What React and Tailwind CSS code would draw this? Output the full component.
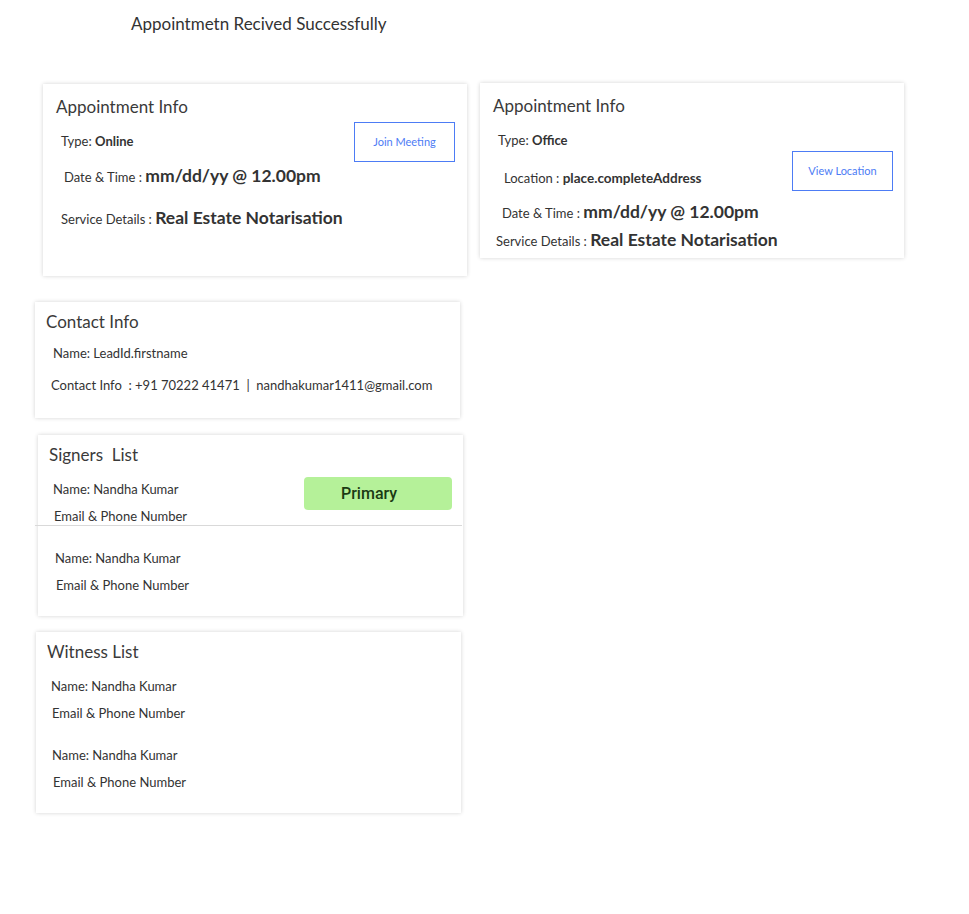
const Card = ({ className = '', children }) => (
  <div className={`bg-white shadow-[0_0_4px_rgba(0,0,0,0.18)] ${className}`}>{children}</div>
);

const Line = ({ className = '', children }) => (
  <div className={`h-[18px] text-[13px] leading-[18px] text-[#333] ${className}`}>{children}</div>
);

const Outline = ({ children, className = '' }) => (
  <button className={`flex h-[40px] w-[101px] items-center justify-center border border-[#4d7cf5] text-[11px] text-[#4d7cf5] ${className}`}>
    {children}
  </button>
);

const Heading = ({ children, className = '' }) => (
  <h3 className={`h-[24px] text-[17px] leading-[24px] text-[#3a3a3a] ${className}`}>{children}</h3>
);

const Person = ({ first = 'mt-[13px]', className = '' }) => (
  <div className={className}>
    <Line className={first}>Name: Nandha Kumar</Line>
    <Line className="mt-[9px] ml-[1px]">Email &amp; Phone Number</Line>
  </div>
);

export default function App() {
  return (
    <div className="min-h-[914px] w-[969px] bg-white font-['Lato',sans-serif] text-[#333]">
      <div className="pt-[12px] pl-[131px] text-[17px] leading-[24px] text-[#333]">Appointmetn Recived Successfully</div>

      <div className="mt-[47px] flex items-start">
        <Card className="mt-[1px] ml-[43px] h-[192px] w-[424px] pt-[11px] pl-[13px]">
          <Heading>Appointment Info</Heading>
          <div className="flex justify-between pr-[12px]">
            <div>
              <Line className="mt-[13px] ml-[5px]">
                Type: <b>Online</b>
              </Line>
              <div className="mt-[14px] ml-[8px] h-[24px] text-[13px] leading-[24px]">
                Date &amp; Time : <span className="text-[17.5px] font-bold">mm/dd/yy @ 12.00pm</span>
              </div>
              <div className="mt-[18px] ml-[5px] h-[24px] text-[13px] leading-[24px]">
                Service Details : <span className="text-[17.5px] font-bold">Real Estate Notarisation</span>
              </div>
            </div>
            <Outline className="mt-[3px]">Join Meeting</Outline>
          </div>
        </Card>

        <Card className="ml-[13px] h-[175px] w-[424px] pt-[11px] pl-[13px]">
          <Heading>Appointment Info</Heading>
          <div className="flex justify-between pr-[11px]">
            <div>
              <Line className="mt-[13px] ml-[5px]">
                Type: <b>Office</b>
              </Line>
              <Line className="mt-[20px] ml-[11px]">
                Location : <b className="text-[13.5px]">place.completeAddress</b>
              </Line>
              <div className="mt-[13px] ml-[9px] h-[24px] text-[13px] leading-[24px]">
                Date &amp; Time : <span className="text-[17.5px] font-bold">mm/dd/yy @ 12.00pm</span>
              </div>
              <div className="mt-[4px] ml-[3px] h-[24px] text-[13px] leading-[24px]">
                Service Details : <span className="text-[17.5px] font-bold">Real Estate Notarisation</span>
              </div>
            </div>
            <Outline className="mt-[33px]">View Location</Outline>
          </div>
        </Card>
      </div>

      <Card className="mt-[26px] ml-[35px] h-[116px] w-[425px] pt-[8px] pl-[11px]">
        <Heading>Contact Info</Heading>
        <Line className="mt-[10px] ml-[7px]">Name: LeadId.firstname</Line>
        <Line className="mt-[14px] ml-[5px]">
          Contact Info&nbsp; : +91 70222 41471 &nbsp;|&nbsp; nandhakumar1411@gmail.com
        </Line>
      </Card>

      <Card className="mt-[17px] ml-[38px] h-[181px] w-[425px] pt-[8px]">
        <Heading className="pl-[11px]">Signers&nbsp; List</Heading>
        <div className="flex justify-between pr-[11px]">
          <Person className="pl-[15px]" />
          <div className="mt-[10px] flex h-[33px] w-[148px] items-center rounded-[4px] bg-[#b5f199] pl-[37px] font-['Roboto',sans-serif] text-[16px] font-medium text-[#1b3a13]">
            Primary
          </div>
        </div>
        <div className="-ml-[3px] h-px w-[427px] bg-[#d9d9d9]" />
        <Person first="mt-[23px]" className="pl-[17px]" />
      </Card>

      <Card className="mt-[16px] ml-[36px] h-[181px] w-[425px] pt-[8px]">
        <Heading className="pl-[11px]">Witness List</Heading>
        <Person className="pl-[15px]" />
        <Person first="mt-[24px]" className="pl-[16px]" />
      </Card>
    </div>
  );
}
